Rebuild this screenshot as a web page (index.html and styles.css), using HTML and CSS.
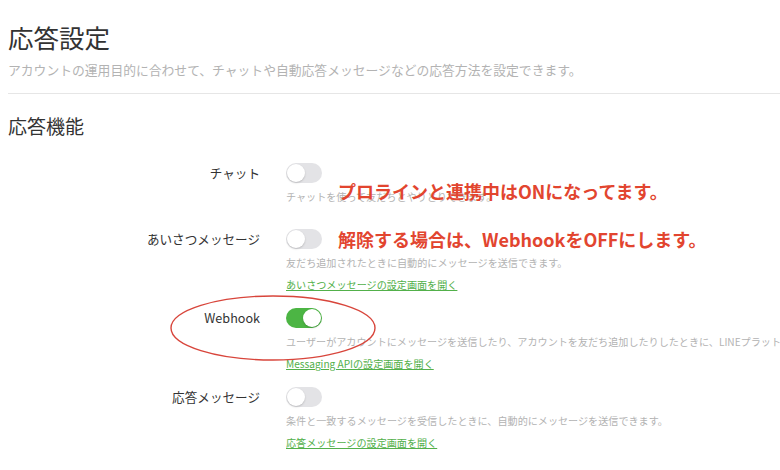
FILE: index.html
```html
<!DOCTYPE html>
<html lang="ja">
<head>
<meta charset="utf-8">
<title>応答設定</title>
<link rel="stylesheet" href="styles.css">
</head>
<body>
<div class="page">
  <h1 class="title">応答設定</h1>
  <p class="subtitle">アカウントの運用目的に合わせて、チャットや自動応答メッセージなどの応答方法を設定できます。</p>
  <hr class="divider">
  <h2 class="section">応答機能</h2>

  <div class="rows">
    <div class="row row-nolink">
      <div class="label">チャット</div>
      <div class="content">
        <span class="toggle"><span class="knob"></span></span>
        <p class="desc">チャットを使って友だちとやりとりできます。</p>
      </div>
    </div>
    <div class="row">
      <div class="label">あいさつメッセージ</div>
      <div class="content">
        <span class="toggle"><span class="knob"></span></span>
        <p class="desc">友だち追加されたときに自動的にメッセージを送信できます。</p>
        <a class="link" href="#">あいさつメッセージの設定画面を開く</a>
      </div>
    </div>
    <div class="row">
      <div class="label">Webhook</div>
      <div class="content">
        <span class="toggle toggle-on"><span class="knob"></span></span>
        <p class="desc">ユーザーがアカウントにメッセージを送信したり、アカウントを友だち追加したりしたときに、LINEプラット</p>
        <a class="link" href="#">Messaging APIの設定画面を開く</a>
      </div>
    </div>
    <div class="row">
      <div class="label">応答メッセージ</div>
      <div class="content">
        <span class="toggle"><span class="knob"></span></span>
        <p class="desc">条件と一致するメッセージを受信したときに、自動的にメッセージを送信できます。</p>
        <a class="link" href="#">応答メッセージの設定画面を開く</a>
      </div>
    </div>
  </div>
</div>

<div class="note note-1">プロラインと連携中はONになってます。</div>
<div class="note note-2">解除する場合は、WebhookをOFFにします。</div>
<svg class="ring" width="210" height="70" viewBox="0 0 210 70">
  <ellipse cx="105" cy="35" rx="102" ry="32" fill="none" stroke="#d8453b" stroke-width="1.4"/>
</svg>
</body>
</html>
```

FILE: styles.css
```css
html, body {
  margin: 0;
  padding: 0;
  background: #ffffff;
  overflow: hidden;
}
body {
  width: 780px;
  height: 470px;
  position: relative;
  font-family: "Noto Sans CJK JP", "Noto Sans", sans-serif;
  color: #333333;
}
.page {
  padding: 22px 0 0 8px;
}
.title {
  margin: 0;
  font-size: 25.5px;
  line-height: 30px;
  font-weight: 400;
  color: #333333;
}
.subtitle {
  margin: 9px 0 0;
  font-size: 12.8px;
  line-height: 18px;
  color: #b3b3b3;
  white-space: nowrap;
}
.divider {
  margin: 14px 0 0;
  border: 0;
  border-top: 1px solid #e6e6e6;
  height: 0;
}
.section {
  margin: 20px 0 0;
  font-size: 19px;
  line-height: 24px;
  font-weight: 400;
  color: #333333;
}
.rows {
  margin-top: 25px;
}
.row {
  display: grid;
  grid-template-columns: 252px 1fr;
  column-gap: 26px;
  margin-bottom: 16px;
}
.row-nolink {
  margin-bottom: 25px;
}
.label {
  text-align: right;
  font-size: 12.6px;
  line-height: 20px;
  color: #333333;
  white-space: nowrap;
}
.content {
  display: flex;
  flex-direction: column;
  align-items: flex-start;
  min-width: 0;
  overflow: hidden;
}
.toggle {
  display: block;
  width: 36px;
  height: 20px;
  border-radius: 10px;
  background: #e3e3e6;
  position: relative;
}
.toggle-on {
  background: #4cb544;
}
.knob {
  position: absolute;
  top: 1px;
  left: 1px;
  width: 18px;
  height: 18px;
  border-radius: 50%;
  background: #ffffff;
  box-shadow: 0 1px 2px rgba(0, 0, 0, 0.18);
}
.toggle-on .knob {
  left: 17px;
}
.desc {
  margin: 7px 0 0;
  font-size: 10.1px;
  line-height: 14px;
  color: #b3b3b3;
  white-space: nowrap;
}
.link {
  margin-top: 8px;
  font-size: 10.1px;
  line-height: 14px;
  color: #52b04a;
  text-decoration: underline;
  white-space: nowrap;
}
.note {
  position: absolute;
  left: 338px;
  font-size: 18px;
  line-height: 24px;
  font-weight: 700;
  color: #e2452f;
  white-space: nowrap;
}
.note-1 {
  top: 179px;
}
.note-2 {
  top: 227px;
}
.ring {
  position: absolute;
  left: 168px;
  top: 293px;
}
```
